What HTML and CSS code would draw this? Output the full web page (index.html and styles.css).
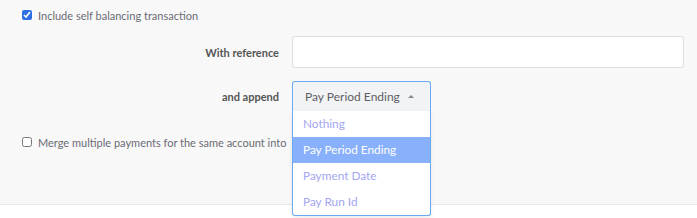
FILE: index.html
```html
<!DOCTYPE html>
<html>
<head>
  <link rel="stylesheet" href="styles.css">
</head>
<body>
  <div class="panel">
    <label class="check-row">
      <input type="checkbox" checked>
      <span>Include self balancing transaction</span>
    </label>

    <div class="form-row first">
      <div class="label">With reference</div>
      <input class="text-input" type="text">
    </div>

    <div class="form-row">
      <div class="label">and append</div>
      <div class="select">
        <div class="select-head">
          <span>Pay Period Ending</span>
          <span class="caret"></span>
        </div>
        <ul class="options">
          <li>Nothing</li>
          <li class="active">Pay Period Ending</li>
          <li>Payment Date</li>
          <li>Pay Run Id</li>
        </ul>
      </div>
    </div>

    <label class="check-row merge">
      <input type="checkbox">
      <span>Merge multiple payments for the same account into</span>
    </label>
  </div>
  <div class="footer"></div>
</body>
</html>
```

FILE: styles.css
```css
* {
  margin: 0;
  padding: 0;
  box-sizing: border-box;
}

body {
  font-family: Lato, "Open Sans", sans-serif;
  font-size: 11px;
  color: #6b6b75;
  background: #fff;
  overflow: hidden;
}

.panel {
  height: 205px;
  background: #f8f8f8;
  border-bottom: 1px solid #e3e7ee;
  padding: 6px 13px 0 22px;
  white-space: nowrap;
}

.check-row {
  display: flex;
  align-items: center;
  gap: 6px;
  height: 18px;
}

.check-row input {
  width: 10px;
  height: 10px;
  margin: 0;
  accent-color: #2f6fe4;
}

.check-row.merge {
  margin-top: 22px;
}

.form-row {
  display: grid;
  grid-template-columns: 257px 1fr;
  align-items: center;
  gap: 13px;
  margin-top: 13px;
}

.form-row.first {
  margin-top: 12px;
}

.label {
  text-align: right;
  font-weight: bold;
  font-size: 11px;
  color: #555;
}

.text-input {
  height: 32px;
  border: 1px solid #dcdfe3;
  border-radius: 3px;
  background: #fff;
  outline: none;
}

.select {
  position: relative;
  width: 139px;
  height: 30px;
}

.select-head {
  height: 30px;
  display: flex;
  align-items: center;
  justify-content: space-between;
  padding: 0 16px 0 12px;
  background: #f2f3f4;
  border: 1px solid #6aaaf2;
  border-bottom: none;
  border-radius: 3px 3px 0 0;
  color: #5e5e66;
  font-size: 12px;
}

.caret {
  width: 0;
  height: 0;
  border-left: 3px solid transparent;
  border-right: 3px solid transparent;
  border-bottom: 3px solid #888;
}

.options {
  position: absolute;
  top: 30px;
  left: 0;
  width: 139px;
  list-style: none;
  background: #fff;
  border: 1px solid #6aaaf2;
  border-top: none;
  border-radius: 0 0 3px 3px;
  box-shadow: 0 2px 4px rgba(0, 0, 0, 0.08);
  z-index: 2;
}

.options li {
  height: 26px;
  line-height: 26px;
  padding-left: 10px;
  color: #a3a6f2;
  font-size: 11.8px;
}

.options li.active {
  background: #89b0fa;
  color: #fff;
}

.footer {
  height: 20px;
  background: #fff;
}
```
